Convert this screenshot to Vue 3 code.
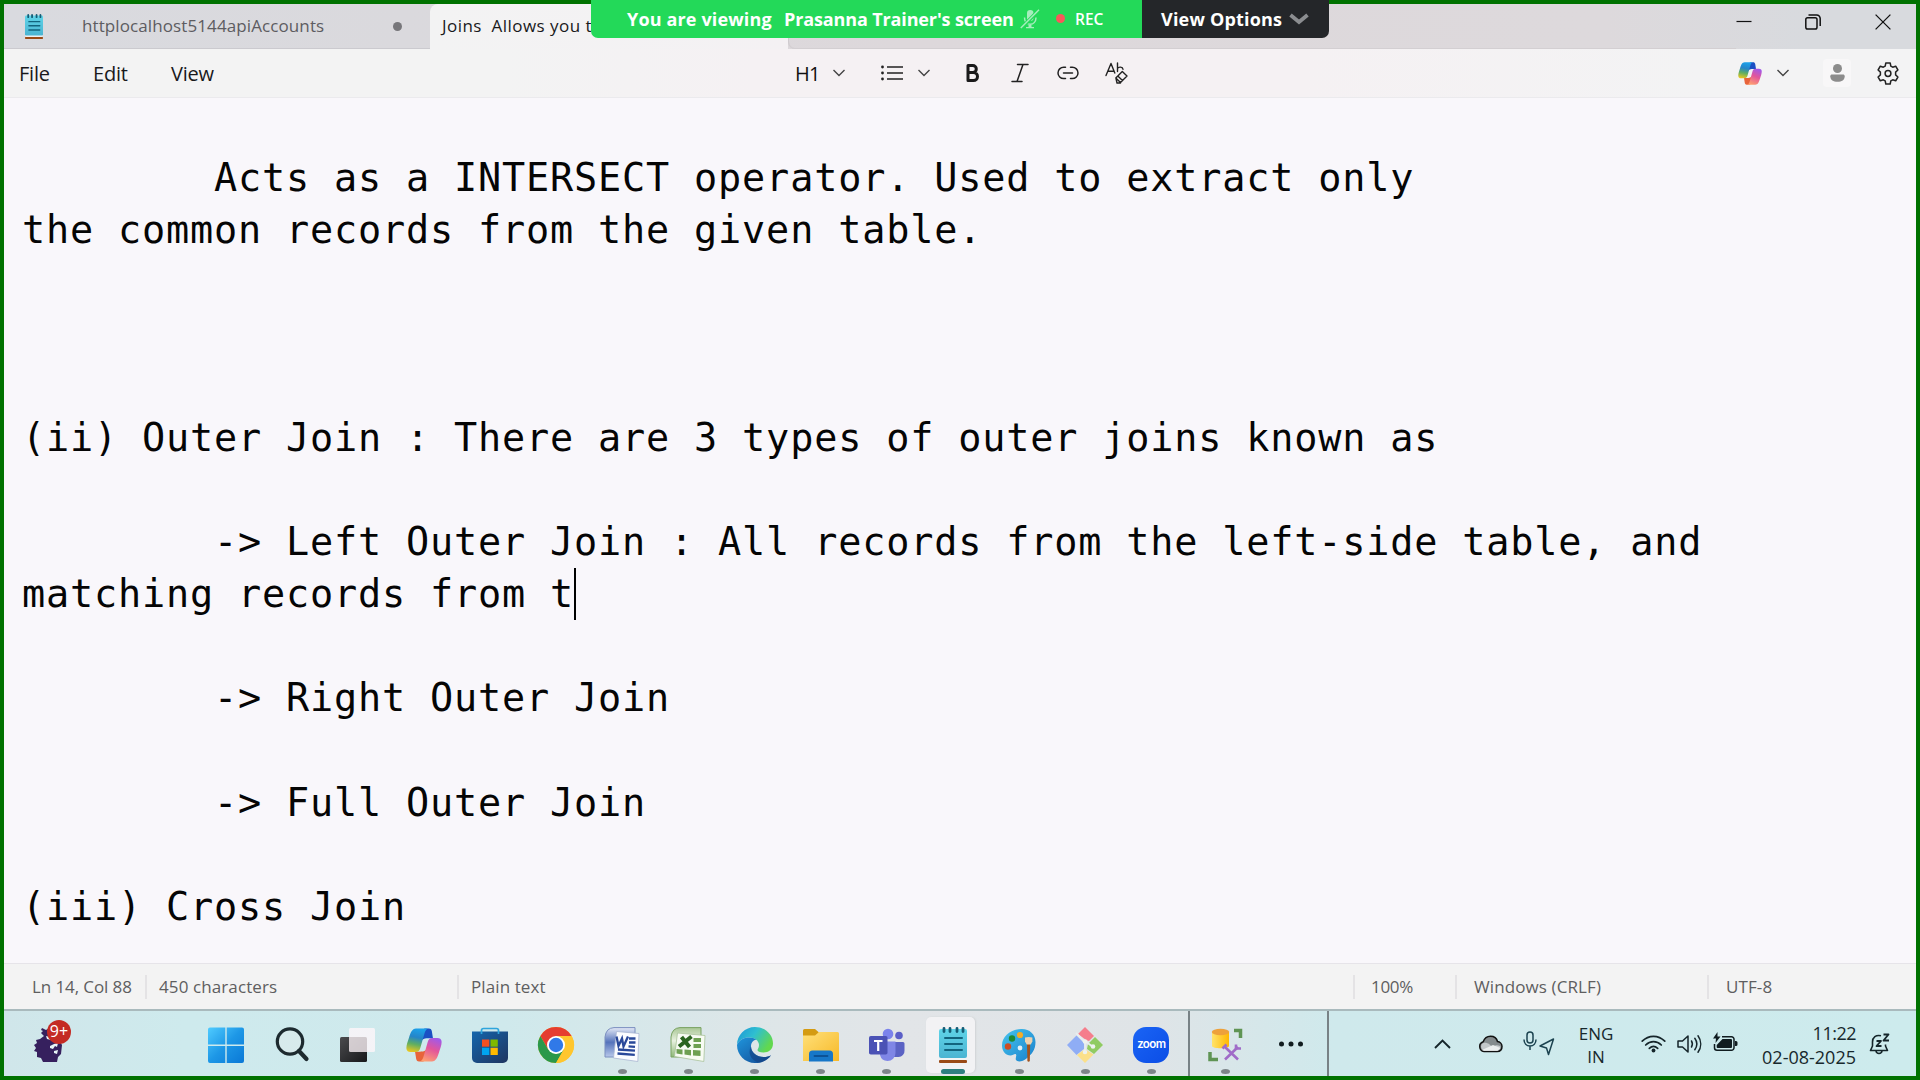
<script setup>
const lines = [
  '        Acts as a INTERSECT operator. Used to extract only',
  'the common records from the given table.',
  '', '', '',
  '(ii) Outer Join : There are 3 types of outer joins known as',
  '',
  '        -> Left Outer Join : All records from the left-side table, and',
  'matching records from t',
  '',
  '        -> Right Outer Join',
  '',
  '        -> Full Outer Join',
  '',
  '(iii) Cross Join'
]
const caretLine = 8
</script>

<template>
  <div class="screen">
    <svg class="defs" width="0" height="0" aria-hidden="true">
      <defs>
        <linearGradient id="winG" x1="0" y1="0" x2="1" y2="1"><stop offset="0" stop-color="#4fcbff" /><stop offset=".5" stop-color="#1d97e6" /><stop offset="1" stop-color="#0a78d6" /></linearGradient>
        <linearGradient id="cpA" x1=".4" y1="0" x2=".2" y2="1"><stop offset="0" stop-color="#1c9fe8" /><stop offset=".35" stop-color="#2585c8" /><stop offset=".65" stop-color="#5fae62" /><stop offset="1" stop-color="#f0c81c" /></linearGradient>
        <linearGradient id="cpB" x1=".7" y1="0" x2=".3" y2="1"><stop offset="0" stop-color="#a259e8" /><stop offset=".45" stop-color="#e2559b" /><stop offset="1" stop-color="#ffa070" /></linearGradient>
        <linearGradient id="npG" x1="0" y1="0" x2="0" y2="1"><stop offset="0" stop-color="#5fd4e8" /><stop offset="1" stop-color="#4bb4d2" /></linearGradient>
        <linearGradient id="stG" x1="0" y1="0" x2="1" y2="1"><stop offset="0" stop-color="#1465ac" /><stop offset="1" stop-color="#1f3560" /></linearGradient>
        <linearGradient id="edA" x1="0" y1="0" x2="1" y2=".5"><stop offset="0" stop-color="#1b93d8" /><stop offset=".5" stop-color="#2fbfd0" /><stop offset="1" stop-color="#62d84e" /></linearGradient>
        <linearGradient id="edB" x1="0" y1="0" x2="1" y2="1"><stop offset="0" stop-color="#1f95dc" /><stop offset="1" stop-color="#124a94" /></linearGradient>
        <linearGradient id="foG" x1="0" y1="0" x2="1" y2="1"><stop offset="0" stop-color="#ffe07a" /><stop offset="1" stop-color="#f7b928" /></linearGradient>
        <linearGradient id="ptG" x1="0" y1="0" x2="1" y2="1"><stop offset="0" stop-color="#45c4ee" /><stop offset="1" stop-color="#1a80cc" /></linearGradient>
        <linearGradient id="tvG" x1="0" y1="0" x2="1" y2="1"><stop offset="0" stop-color="#4b4b4e" /><stop offset="1" stop-color="#17181a" /></linearGradient>
        <linearGradient id="wdG" x1="0" y1="0" x2="0" y2="1"><stop offset="0" stop-color="#e3e9f6" /><stop offset=".5" stop-color="#5573bb" /><stop offset="1" stop-color="#b8c8ea" /></linearGradient>
        <linearGradient id="xlG" x1="0" y1="0" x2="0" y2="1"><stop offset="0" stop-color="#a9c795" /><stop offset=".45" stop-color="#e7f0df" /><stop offset="1" stop-color="#8eb877" /></linearGradient>
        <linearGradient id="dbG" x1="0" y1="0" x2="1" y2="0"><stop offset="0" stop-color="#ffe36a" /><stop offset="1" stop-color="#ffb800" /></linearGradient>
        <symbol id="copilot" viewBox="0 0 36 34">
          <path d="M23 0.5h-3c-3 0-3.500 2-4.500 5L12 18c4-8 6-8 15-7.500L25.800 3C25.200 1.200 24.500 .5 23 .5z" fill="#1b4fc4" />
          <path d="M13 33.500h3c3 0 3.500-2 4.500-5L24 16c-4 8-6 8-15 7.500l1.200 7.500c.6 1.800 1.300 2.500 2.800 2.500z" fill="#e8643a" />
          <path d="M23 .5H10C6 .5 4.500 5 3.200 9 1.600 14-.5 19 .8 22c1 2 3 2 5.500 2h3.500c2.500 0 3.700-1.500 4.500-4l4-14c.9-3.500 2.200-5.500 4.700-5.500z" fill="url(#cpA)" />
          <path d="M13 33.500h13c4 0 5.500-4.500 6.800-8.500 1.600-5 3.700-10 2.400-13-1-2-3-2-5.500-2h-3.500c-2.500 0-3.700 1.500-4.500 4l-4 14c-.9 3.500-2.200 5.500-4.700 5.500z" fill="url(#cpB)" />
        </symbol>
        <symbol id="notepad" viewBox="0 0 28 36">
          <rect x="0" y="33" width="28" height="3" rx="1" fill="#9a4a16" />
          <rect x="1" y="30" width="26" height="3" fill="#f0f4f5" />
          <rect x="0" y="2" width="28" height="29" rx="2" fill="url(#npG)" />
          <path d="M5 1.500v3M11 1.500v3M18 1.500v3M24 1.500v3" stroke="#155c75" stroke-width="2.800" stroke-linecap="round" />
          <path d="M6 11h17M6 17h17M6 23h17" stroke="#12647e" stroke-width="2" stroke-linecap="round" />
        </symbol>
      </defs>
    </svg>

    <header class="tabs">
      <div class="tab">
        <svg class="tab-icon" viewBox="0 0 28 36" preserveAspectRatio="none"><use href="#notepad" /></svg>
        <span class="tab-title">httplocalhost5144apiAccounts</span>
        <i class="unsaved"></i>
      </div>
      <div class="tab active"><span>Joins&nbsp; Allows you t</span></div>
      <div class="tab rest"></div>
      <div class="window-buttons">
        <svg width="16" height="16" viewBox="0 0 16 16"><path d="M.5 7.500h15" stroke="#111" stroke-width="1.200" /></svg>
        <svg width="16" height="16" viewBox="0 0 16 16" fill="none" stroke="#111" stroke-width="1.500"><rect x=".8" y="3.800" width="11.200" height="11.200" rx="1.800" /><path d="M3.500 1h8.200a3.500 3.500 0 0 1 3.500 3.500v7.500" /></svg>
        <svg width="16" height="16" viewBox="0 0 16 16"><path d="M.6.6l14.800 14.800M15.400.6L.6 15.400" stroke="#111" stroke-width="1.300" /></svg>
      </div>
    </header>

    <nav class="toolbar">
      <span class="menu file">File</span>
      <span class="menu edit">Edit</span>
      <span class="menu view">View</span>
      <div class="format">
        <span class="h1">H1</span>
        <svg class="chev c1" viewBox="0 0 12 8"><path d="M.5 1l5.500 5.500L11.500 1" /></svg>
        <svg class="list" width="22" height="16" viewBox="0 0 22 16"><path d="M6 2h16M6 8h16M6 14h16" stroke="#222" stroke-width="1.400" /><g fill="#222"><circle cx="1.500" cy="2" r="1.400" /><circle cx="1.500" cy="8" r="1.400" /><circle cx="1.500" cy="14" r="1.400" /></g></svg>
        <svg class="chev c2" viewBox="0 0 12 8"><path d="M.5 1l5.500 5.500L11.500 1" /></svg>
        <svg class="bold" width="14" height="18" viewBox="0 0 14 18"><path d="M2 1.500h4.800a3.500 3.500 0 0 1 0 7H2zM2 8.500h5.500a4 4 0 0 1 0 8H2z" fill="none" stroke="#1a1a1a" stroke-width="3" stroke-linejoin="round" /></svg>
        <svg class="italic" width="18" height="20" viewBox="0 0 18 20"><path d="M6.500 1.500H17M1 18.500h10M12 1.500L6 18.500" fill="none" stroke="#222" stroke-width="1.500" stroke-linecap="round" /></svg>
        <svg class="link" width="22" height="14" viewBox="0 0 22 14"><path d="M8.500 1.200H6.700a5.700 5.700 0 0 0 0 11.400h1.800M13.500 1.200h1.800a5.700 5.700 0 0 1 0 11.400h-1.800M6.500 7h9" fill="none" stroke="#222" stroke-width="1.500" stroke-linecap="round" /></svg>
        <svg class="clear" width="24" height="22" viewBox="0 0 24 22"><g fill="none" stroke="#222" stroke-width="1.400" stroke-linejoin="round" stroke-linecap="round"><path d="M1 13.500L6 1.500 9.800 11M2.800 9.200H8.800M12.500 1v8.500M12.500 6.500c1-2 5.200-2 5.500.8" /><path d="M17.300 9.500l4.700 4.500-6.500 6.500-4.700-4.500zM12.800 14l4.700 4.500M11 16.500l1 4.500h3.500" /></g></svg>
      </div>
      <div class="account">
        <svg width="24" height="23" viewBox="0 0 36 34" preserveAspectRatio="none"><use href="#copilot" /></svg>
        <svg class="chev c3" viewBox="0 0 12 8"><path d="M.5 1l5.500 5.500L11.500 1" /></svg>
        <span class="person"><svg width="15" height="18" viewBox="0 0 15 18" fill="#8c8c8c"><circle cx="7.500" cy="4.500" r="4.500" /><path d="M2 10.500h11c1 0 1.700.7 1.700 1.700 0 3.800-3 5.600-7.200 5.600S.3 16 .3 12.200c0-1 .7-1.700 1.700-1.700z" /></svg></span>
        <svg class="gear" width="22" height="23" viewBox="0 0 22 23" fill="none" stroke="#222" stroke-width="1.500" stroke-linejoin="round"><path d="M8.800 1h4.400l.6 3.100 1.900 1.100 3-1 2.200 3.800-2.300 2.100v2.800l2.300 2.100-2.200 3.800-3-1-1.900 1.100-.6 3.100H8.800l-.6-3.100-1.900-1.100-3 1L1.100 15l2.300-2.100v-2.800L1.100 8l2.200-3.800 3 1 1.900-1.100z" /><circle cx="11" cy="11.500" r="2.900" /></svg>
      </div>
    </nav>

    <main class="editor">
      <div v-for="(line, i) in lines" :key="i" class="line">{{ line }}<i v-if="i === caretLine" class="caret"></i></div>
    </main>

    <footer class="status">
      <span class="s-pos">Ln 14, Col 88</span>
      <span class="s-chars">450 characters</span>
      <span class="s-type">Plain text</span>
      <span class="s-zoom">100%</span>
      <span class="s-eol">Windows (CRLF)</span>
      <span class="s-enc">UTF-8</span>
    </footer>

    <div class="taskbar">
      <div class="widget">
        <svg width="30" height="36" viewBox="0 0 30 36"><path d="M8 2l4 2 3-2 5 5 5 7 3 5-1 9-3 3-1 5H9l-2-4-4-1v-5l-3-1 2-3-2-3 3-2-1-3 4-1 4-3-3-3 2-2-2-1z" fill="#36205e" /><path d="M12 10l4 1 3 2-2 1-4-1zM16 20l4-2 4-1-1 4-2-1-2 3-3-1zM20 25l4-1-1 4-3-1z" fill="#e7f5f7" /></svg>
        <span class="badge">9+</span>
      </div>
      <div class="apps">
        <div class="app"><svg viewBox="0 0 36 36"><path d="M2 .5h15.300v17H0v-15a2 2 0 0 1 2-2zM18.700.5H34a2 2 0 0 1 2 2v15H18.700zM0 19h17.300v17H2a2 2 0 0 1-2-2zM18.700 19H36v15a2 2 0 0 1-2 2H18.700z" fill="url(#winG)" /></svg></div>
        <div class="app"><svg viewBox="0 0 36 36"><circle cx="16" cy="14.500" r="12.700" fill="#dce9eb" fill-opacity=".7" stroke="#1d2a2f" stroke-width="3.200" /><path d="M25 24l7.500 8" stroke="#1d2a2f" stroke-width="4.200" stroke-linecap="round" /></svg></div>
        <div class="app"><svg viewBox="0 0 36 36"><rect x="0" y="10" width="27" height="25" rx="1.500" fill="url(#tvG)" /><rect x="9" y="1" width="26" height="24" rx="1.500" fill="#fff6fa" fill-opacity=".78" /></svg></div>
        <div class="app"><svg viewBox="0 0 36 36"><use href="#copilot" x="0" y="1" width="36" height="34" /></svg></div>
        <div class="app"><svg viewBox="0 0 36 36"><path d="M0 4.500h36V31a5 5 0 0 1-5 5H5a5 5 0 0 1-5-5z" fill="url(#stG)" /><path d="M9.500 7V3.500a2 2 0 0 1 2-2h13a2 2 0 0 1 2 2V7" fill="none" stroke="#2fa5dc" stroke-width="1.700" /><path d="M10 12.500h7.300v7.200H10z" fill="#f25022" /><path d="M18.500 12.500h7.300v7.200h-7.300z" fill="#7fba00" /><path d="M10 20.700h7.300V28H10z" fill="#00a4ef" /><path d="M18.500 20.700h7.300V28h-7.300z" fill="#ffb900" /></svg></div>
        <div class="app"><svg viewBox="0 0 36 36"><circle cx="18" cy="18" r="18" fill="#ffc62e" /><path d="M18 9h15.600A18 18 0 0 0 2.400 9l7.800 13.500L18 9z" fill="#e53d30" /><path d="M2.400 9A18 18 0 0 0 18 36l7.800-13.500L18 27l-7.800-4.500z" fill="#2b984a" /><path d="M18 9h15.600A18 18 0 0 1 18 36l7.800-13.500z" fill="#ffc62e" /><circle cx="18" cy="18" r="9" fill="#fff" /><circle cx="18" cy="18" r="7.200" fill="#3079e8" /></svg></div>
        <div class="app running"><svg viewBox="0 0 36 36"><path d="M10 .6h21V30H1V10Q2 1 10 .6z" fill="url(#wdG)" stroke="#7b8fbf" stroke-width="1" /><path d="M12.500 4.500l22.500 2-1.200 28L9.500 31z" fill="#fbfcff" stroke="#aab6d2" stroke-width=".8" /><path d="M25 11.500h6.500M25 15.500h6.500M24.500 19.300l6.500.5M14 22.500l17 1.200M13.500 26.500l17.300 1.300" stroke="#29489a" stroke-width="2.300" /><path d="M12.500 9.500l2 9.500 3.500-7.500 1.500 8 4.500-10" fill="none" stroke="#29489a" stroke-width="2.300" /></svg><i></i></div>
        <div class="app running"><svg viewBox="0 0 36 36"><path d="M10 .6h21V30H1V10Q2 1 10 .6z" fill="url(#xlG)" stroke="#7aa363" stroke-width="1" /><path d="M7.500 6l27.500 2.500-1.200 26L4.500 29.500z" fill="#f7fbf3" stroke="#a9c39a" stroke-width=".8" /><path d="M23.500 11h7.500v4h-7.500zM23.500 17h7.500v4h-7.500zM23 23l7.500.6v5.500L23 28.500zM14.500 22.500l6.500.5v5.500l-6.500-1zM6.500 22l6 .4v5l-6-1z" fill="#6ea052" /><path d="M11.500 10l8 10M21.500 9.500L9 19.500" stroke="#2a6420" stroke-width="4" /></svg><i></i></div>
        <div class="app running"><svg viewBox="0 0 36 36"><path d="M0 18C0 8 8 0 18 0s18 7.500 18 16.500c0 6-4.500 9-9.500 9-4 0-6-1-6-2.500 0-1 1.500-2 1.500-5 0-4-4-7.500-10-7.500C6.500 10.500 2 13 0 18z" fill="url(#edA)" /><path d="M0 18c2-5 6.500-7.500 12-7.500 3 0 5.500.9 7.300 2.300-3 .2-5.300 3-5.300 6.700 0 6 6 10.500 12.500 10.500 3.500 0 6-.8 7.500-1.800C31 33 25 36 18 36 8 36 0 28 0 18z" fill="url(#edB)" /><path d="M14 19.500c-3.500 6-.5 13.500 7.500 16C28 35 31.500 31.500 34 28.200 26 32.500 15 29 14 19.500z" fill="#123f80" opacity=".6" /></svg><i></i></div>
        <div class="app running"><svg viewBox="0 0 36 36"><path d="M0 3.500A1.500 1.500 0 0 1 1.500 2H12l4 3.500L13 9H0z" fill="#d49b12" /><path d="M0 8.500h12l4-3.500h18.500A1.500 1.500 0 0 1 36 6.500V34H0z" fill="url(#foG)" /><path d="M6 34.500V27a3.500 3.500 0 0 1 3.500-3.500h17A3.500 3.500 0 0 1 30 27v7.500z" fill="#1777c8" /><path d="M11.500 29h13" stroke="#0c5296" stroke-width="1.800" stroke-linecap="round" /></svg><i></i></div>
        <div class="app running"><svg viewBox="0 0 36 36"><circle cx="19" cy="7" r="5.300" fill="#7b83eb" /><circle cx="30" cy="8.500" r="3.800" fill="#5b5fc7" /><path d="M25 15h9a1.500 1.500 0 0 1 1.500 1.500v7A6 6 0 0 1 29.500 30H25z" fill="#5b63c4" /><path d="M11 14.500h15.500V26a8 8 0 0 1-8 8 8 8 0 0 1-7.500-6z" fill="#7f86e6" /><rect x="0" y="9" width="18.500" height="18.500" rx="1.800" fill="#4b52b5" /><path d="M5 14h8.500M9.200 14v10" stroke="#fff" stroke-width="2.200" /></svg><i></i></div>
        <div class="app current"><svg viewBox="0 0 28 36"><use href="#notepad" /></svg><i></i></div>
        <div class="app running"><svg viewBox="0 0 36 36"><path d="M20 2c8-.5 14.500 5 14.500 13 0 8-4 12.500-9 16.500-3.500 3-9 4-10.500 1.500-1-2 1-4 0-5.500s-3 1-5.500 1C5 28.500 1 24.500 1 18.500 1 9 10 2.500 20 2z" fill="url(#ptG)" /><circle cx="11" cy="11.500" r="3.200" fill="#1d8a35" /><circle cx="19" cy="8" r="3.100" fill="#f3ad27" /><circle cx="7" cy="19.500" r="3.200" fill="#cc4c24" /><circle cx="19" cy="21" r="2.400" fill="#dff0f7" /><path d="M26 16h3.200l-.4 18a1.300 1.300 0 0 1-2.400 0z" fill="#a2531e" /><path d="M24 10.500q3.700-1 7.400 0v4l-1.700 3h-4l-1.700-3z" fill="#ecd2b0" /></svg><i></i></div>
        <div class="app running"><svg viewBox="0 0 36 36"><path d="M18 0l9 9-5 5-3-1-8-6z" fill="#f57e8c" /><path d="M9.500 8.500l8 8v5l-8 6.500L0 18z" fill="#8fadf5" /><path d="M28 10l8 8-9 9-7-5 1-5z" fill="#90cb62" /><path d="M18 22l8.500 5.500L18 36l-8-8z" fill="#fbe08a" /><path d="M9 6l9 9v12M18 14l8 6" stroke="#e8eeee" stroke-width="1.800" fill="none" /><circle cx="18" cy="14.500" r="2.300" fill="#eef2ef" /><circle cx="26" cy="19.500" r="2.300" fill="#eef2ef" /><circle cx="18" cy="25" r="2.300" fill="#eef2ef" /></svg><i></i></div>
        <div class="app running"><span class="zoom-logo">zoom</span><i></i></div>
      </div>
      <div class="overflow">
        <div class="app running"><svg viewBox="0 0 36 36"><path d="M4 5v14c0 3 17 3 17 0V5z" fill="url(#dbG)" /><ellipse cx="12.500" cy="5" rx="8.700" ry="3.300" fill="#eda13b" /><path d="M26 3.500h6.500V11M2 25v7.500h8" fill="none" stroke="#5f9454" stroke-width="3.500" /><path d="M17 20l13 12.500M30 20L17 32.500" stroke="#a06cc8" stroke-width="2.600" /><path d="M14.500 21.500l4-4M28 17.500v4h5" stroke="#a06cc8" stroke-width="2.600" fill="none" /></svg><i></i></div>
        <svg class="dots" width="26" height="6" viewBox="0 0 26 6" fill="#111c1f"><circle cx="3.500" cy="3" r="2.500" /><circle cx="13" cy="3" r="2.500" /><circle cx="22.500" cy="3" r="2.500" /></svg>
      </div>
      <div class="tray">
        <svg class="t-up" width="17" height="10" viewBox="0 0 17 10"><path d="M1 9l7.500-7.500L16 9" fill="none" stroke="#15252a" stroke-width="1.900" /></svg>
        <svg class="t-cloud" width="25" height="18" viewBox="0 0 25 18"><path d="M6 16.500a5 5 0 0 1-.8-9.700C6.500 3 9 1.200 12.500 1.200c4 0 6.300 2.300 7 5.300a5 5 0 0 1 4.500 5c0 3-2 5-5 5z" fill="#858b8d" stroke="#111" stroke-width="1.500" /><path d="M6 15.700a4.300 4.300 0 0 1-.5-8c5-.5 6 2 9 4 3-1.600 5-2 8-.5 0 2.700-1.500 4.500-4 4.500z" fill="#c4c8ca" /><path d="M4 15l11-5 7.500 3-3 2.700H6z" fill="#eceeee" /></svg>
        <svg class="t-mic" width="14" height="20" viewBox="0 0 14 20" fill="none" stroke="#1c4350" stroke-width="1.500"><rect x="4" y="1" width="6" height="11" rx="3" /><path d="M1 8.500c0 4 2.500 6.500 6 6.500s6-2.500 6-6.500M7 15v4" /></svg>
        <svg class="t-loc" width="16" height="18" viewBox="0 0 16 18" fill="none" stroke="#1c4350" stroke-width="1.500" stroke-linejoin="round"><path d="M14.500 1L9.500 16.500 7.500 10 1 8z" /></svg>
        <span class="lang"><span>ENG</span><span>IN</span></span>
        <svg class="t-wifi" width="25" height="20" viewBox="0 0 25 20" fill="none" stroke="#15252a" stroke-width="1.700" stroke-linecap="round"><path d="M1.200 7.200c6.500-6.500 16.100-6.500 22.600 0M4.700 11c4.500-4.500 11.100-4.500 15.600 0M8.300 14.300c2.500-2.300 5.900-2.300 8.400 0" /><circle cx="12.500" cy="16.500" r="1.900" fill="#15252a" stroke="none" /></svg>
        <svg class="t-vol" width="25" height="20" viewBox="0 0 25 20" fill="none" stroke="#15252a" stroke-width="1.500" stroke-linejoin="round" stroke-linecap="round"><path d="M1 7v6h4.500l5.500 5V2L5.500 7zM14.500 7c1.200 2 1.200 4 0 6M17.800 4.300c2.600 3.600 2.600 7.800 0 11.400M21 1.800c3.600 5 3.600 11.400 0 16.400" /></svg>
        <svg class="t-bat" width="25" height="20" viewBox="0 0 25 20"><path d="M9 4.700h9.500A2.500 2.500 0 0 1 21 7.200v8.600a2.500 2.500 0 0 1-2.500 2.500H4a2.500 2.500 0 0 1-2.500-2.500V12" fill="none" stroke="#101c20" stroke-width="1.500" /><path d="M9.500 7H18a1 1 0 0 1 1 1v7a1 1 0 0 1-1 1H4.500a.8.800 0 0 1-.8-.8V13z" fill="#101c20" /><path d="M22 9h1a1.500 1.500 0 0 1 1.500 1.500v2A1.500 1.500 0 0 1 23 14h-1zM4.500 0L0 6.500h3L2.500 11 7.500 4.500h-3z" fill="#101c20" /></svg>
        <span class="clock"><span class="time">11:22</span><span class="date">02-08-2025</span></span>
        <svg class="t-bell" width="22" height="22" viewBox="0 0 22 22" fill="none" stroke="#15252a" stroke-width="1.600" stroke-linejoin="round"><path d="M12 2.800C7 1.500 3.500 4.500 3.500 9v4L1.500 17.500h17l-2-4.500v-1.500M7 18c.5 3.300 5.500 3.300 6 0" /><path d="M7.500 8h4.500l-4.500 5H12.500M14.500 1.500h5L14.500 7.500h5.500" stroke-width="1.800" /></svg>
      </div>
    </div>

    <div class="share-banner">
      <div class="sharing">
        <span class="b-you">You are viewing</span>
        <span class="b-name">Prasanna Trainer's screen</span>
        <svg width="20" height="20" viewBox="0 0 20 20"><g fill="#a6edbd"><rect x="7" y="1" width="6.500" height="11" rx="3.200" /><path d="M8.500 16h3v2.500h-3zM6 18h8v1.300H6z" /></g><path d="M4.500 8.500c0 9 11.500 9 11.500 0" fill="none" stroke="#a6edbd" stroke-width="1.500" /><path d="M.8 19.500L19 1" stroke="#23d959" stroke-width="3.500" /><path d="M.8 19L19 .8" stroke="#a6edbd" stroke-width="1.500" /></svg>
        <i></i>
        <span class="b-rec">REC</span>
      </div>
      <div class="options">
        <span>View Options</span>
        <svg width="20" height="12" viewBox="0 0 20 12"><path d="M1.500 2L10 9 18.500 2" fill="none" stroke="#8b8d90" stroke-width="3.800" /></svg>
      </div>
    </div>
  </div>
</template>

<style>
body { overflow: hidden; }
</style>

<style scoped>
.screen { position: relative; box-sizing: border-box; width: 1920px; height: 1080px; border: 4px solid #007200; display: flex; flex-direction: column; background: #f9f7fb; font-family: "Open Sans", "Noto Sans", sans-serif; }
.defs { position: absolute; }
svg { display: block; flex: none; overflow: visible; }
span { white-space: nowrap; }

.tabs { height: 45px; flex: none; display: flex; background: linear-gradient(90deg, #d9dadf 0, #dad9dd 400px, #ddd8db 900px, #ddd9dc 1600px, #d8dade 1800px); }
.tab { display: flex; align-items: center; box-sizing: border-box; }
.tab:first-child { width: 426px; border-bottom: 1px solid #cbcacf; }
.tab-icon { width: 18px; height: 25px; margin-left: 21px; }
.tab-title { width: 307px; margin: -1px 0 0 39px; font-size: 17px; letter-spacing: .1px; color: #5d5c61; }
.unsaved { width: 9px; height: 9px; border-radius: 50%; background: #77767a; margin-left: 4px; }
.tab.active { width: 358px; background: linear-gradient(90deg, #f3f3f3, #f4f1f3); border-radius: 8px 8px 0 0; padding-left: 12px; font-size: 17px; font-weight: 500; color: #19191b; letter-spacing: .45px; }
.tab.active span { margin-top: -2px; }
.tab.rest { flex: 1; border-bottom-left-radius: 7px; border-left: 1px solid #cfcbce; box-shadow: inset 0 -1px #d3cfd2; }
.window-buttons { width: 180px; display: flex; gap: 53px; align-items: flex-start; padding-top: 10px; box-sizing: border-box; }
.window-buttons svg:nth-child(3) { margin-left: 1px; }

.toolbar { height: 49px; flex: none; display: flex; align-items: center; background: linear-gradient(90deg, #f3f3f3 0, #f3f3f3 500px, #f5f1f3 750px, #f5f1f3 1300px, #f3f3f4 1700px); border-bottom: 1px solid #ebeaed; box-sizing: border-box; font-size: 20px; color: #19191b; }
.menu { width: 74px; margin-top: 1px; letter-spacing: -.2px; }
.menu.file { margin-left: 15px; }
.menu.edit { width: 78px; }
.menu.view { width: 622px; }
.format { display: flex; align-items: center; width: 945px; }
.h1 { width: 38px; font-size: 20px; letter-spacing: -.8px; color: #111; margin-left: 2px; }
.chev { width: 12px; height: 8px; fill: none; stroke: #444; stroke-width: 1.400; }
.c1 { margin-right: 36px; }
.list { margin-right: 15px; }
.c2 { margin-right: 36px; }
.bold { margin-right: 31px; }
.italic { margin-right: 28px; }
.link { margin-right: 26px; }
.account { display: flex; align-items: center; }
.c3 { margin-left: 15px; }
.person { width: 28px; height: 28px; margin: 0 26px 0 34px; border-radius: 4px; background: #f8f7f8; display: flex; align-items: center; justify-content: center; }

.editor { flex: none; height: 865px; padding: 54px 0 0 18px; box-sizing: border-box; background: #f9f7fb; font-family: "DejaVu Sans Mono", monospace; font-size: 38.500px; line-height: 52.050px; letter-spacing: .825px; color: #050505; }
.line { height: 52.050px; white-space: pre; }
.caret { display: inline-block; width: 1.500px; height: 52px; background: #000; vertical-align: top; margin-left: 0; }

.status { flex: none; height: 46px; display: flex; align-items: center; background: #f3f3f3; border-top: 1px solid #e6e4e9; box-sizing: border-box; font-size: 17px; color: #5e5e60; letter-spacing: .1px; padding-top: 1px; }
.status span { height: 24px; line-height: 24px; box-sizing: border-box; border-left: 2px solid #e4e3e5; }
.status .s-pos { border: 0; margin-left: 28px; width: 113px; letter-spacing: -.1px; }
.s-chars { width: 312px; padding-left: 12px; }
.s-type { width: 896px; padding-left: 12px; }
.s-zoom { width: 102px; padding-left: 16px; letter-spacing: -.3px; }
.s-eol { width: 252px; padding-left: 17px; }
.s-enc { padding-left: 17px; }

.taskbar { flex: none; height: 67px; box-sizing: border-box; border-top: 2px solid #a9babd; display: flex; background: linear-gradient(90deg, #d0e6ea 0, #ceeaed 180px, #cfe9ec 500px, #dde6e8 740px, #e2e5e8 900px, #dfe4e7 1150px, #cfe9ec 1330px, #cdebed 1900px); color: #17282c; }
.widget { position: relative; width: 188.500px; padding: 15px 0 0 30px; box-sizing: border-box; }
.badge { position: absolute; left: 43px; top: 8.500px; width: 24px; height: 24px; border-radius: 50%; background: #c42b24; color: #fff; font-size: 16px; line-height: 23px; text-align: center; }
.apps { display: flex; width: 995.500px; }
.app { position: relative; flex: none; width: 66.130px; height: 65px; display: flex; justify-content: center; align-items: flex-start; padding-top: 16px; box-sizing: border-box; }
.app > svg { width: 36px; height: 36px; }
.app > i { position: absolute; bottom: 2px; left: 28.500px; width: 9px; height: 5px; border-radius: 50%; background: #7d8589; }
.current::before { content: ""; position: absolute; left: 6.500px; top: 6px; width: 49px; height: 56px; border-radius: 5px; background: #f2f2f4; box-shadow: 1px 0 2px #d0d3d6; }
.current > svg { position: relative; width: 28px; }
.current > i { left: 21.500px; width: 24px; border-radius: 3px; background: #2e7f80; }
.zoom-logo { width: 36px; height: 36px; border-radius: 13px; background: linear-gradient(135deg, #1a64f5, #0b4de6); color: #fff; font-family: Inter, sans-serif; font-size: 11.500px; font-weight: 600; line-height: 34px; text-align: center; letter-spacing: -.6px; }
.overflow { flex: none; width: 141px; box-sizing: border-box; border-left: 2px solid #788286; border-right: 2px solid #788286; display: flex; align-items: center; }
.overflow .app { width: 71px; }
.overflow .app > i { left: 31px; }
.dots { margin-left: 17px; }

.tray { display: flex; align-items: center; }
.t-up { margin-left: 105px; }
.t-cloud { margin: 1px 0 0 27px; }
.t-mic { margin: -5px 0 0 20px; }
.t-loc { margin: 6px 0 0 2px; }
.lang { width: 50px; margin: 3px 0 0 16px; display: flex; flex-direction: column; align-items: center; font-size: 17px; line-height: 23px; }
.t-wifi { margin: 1px 0 0 20px; }
.t-vol { margin: 1px 0 0 11px; }
.t-bat { margin: -3px 0 0 11px; }
.clock { width: 118px; display: flex; flex-direction: column; align-items: flex-end; font-size: 18px; line-height: 24px; margin-top: 2px; }
.time { letter-spacing: -.5px; }
.t-bell { margin: 1px 0 0 13px; }

.share-banner { position: absolute; left: 587px; top: -4px; width: 738px; height: 38px; display: flex; border-radius: 0 0 7px 7px; overflow: hidden; color: #fff; font-weight: 700; font-size: 18px; }
.sharing { flex: none; width: 551px; background: #23d959; display: flex; align-items: center; box-sizing: border-box; padding: 0 0 1px 36px; }
.b-you { width: 157px; letter-spacing: .15px; }
.b-name { width: 236px; letter-spacing: -.13px; }
.sharing i { width: 9px; height: 9px; border-radius: 50%; background: #f9575a; margin: 0 10px 0 16px; }
.b-rec { font-size: 15.500px; font-weight: 600; }
.options { flex: 1; background: #242629; display: flex; align-items: center; padding: 0 0 1px 19px; }
.options span { width: 128px; letter-spacing: .2px; }
</style>
